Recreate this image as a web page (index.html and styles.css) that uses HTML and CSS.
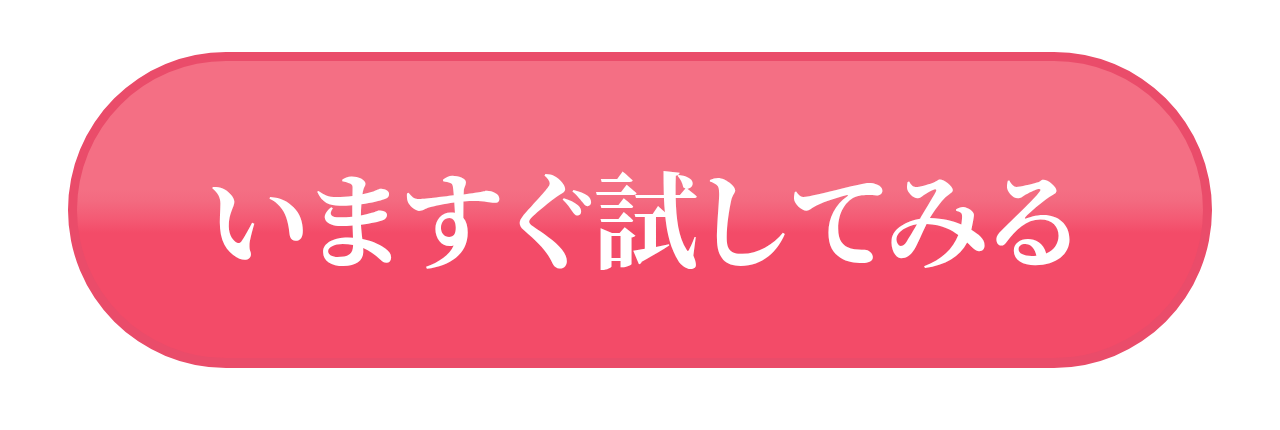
FILE: index.html
```html
<!DOCTYPE html>
<html lang="ja">
<head>
<meta charset="utf-8">
<title>いますぐ試してみる</title>
<link rel="stylesheet" href="styles.css">
</head>
<body>
<main class="stage">
  <a class="cta" href="#">
    <span class="cta-label">いますぐ試してみる</span>
  </a>
</main>
</body>
</html>
```

FILE: styles.css
```css
html, body {
  margin: 0;
  padding: 0;
  background: #ffffff;
}

.stage {
  width: 1280px;
  height: 430px;
  box-sizing: border-box;
  padding: 52px 68px 0 68px;
}

.cta {
  display: flex;
  align-items: center;
  justify-content: center;
  box-sizing: border-box;
  width: 1144px;
  height: 316px;
  border: 9px solid #ea4c6a;
  border-bottom-width: 10px;
  border-radius: 158px;
  background: linear-gradient(to bottom,
    #f46f84 0px,
    #f46f84 128px,
    #f36a80 140px,
    #f45a74 158px,
    #f34b68 172px,
    #f34b68 100%);
  text-decoration: none;
  padding-top: 10px;
}

.cta-label {
  font-family: "Noto Serif CJK JP", "Noto Sans CJK JP", serif;
  font-weight: 700;
  font-size: 105px;
  line-height: 1;
  color: #ffffff;
  letter-spacing: -8px;
  padding-left: 4px;
  white-space: nowrap;
}
```
